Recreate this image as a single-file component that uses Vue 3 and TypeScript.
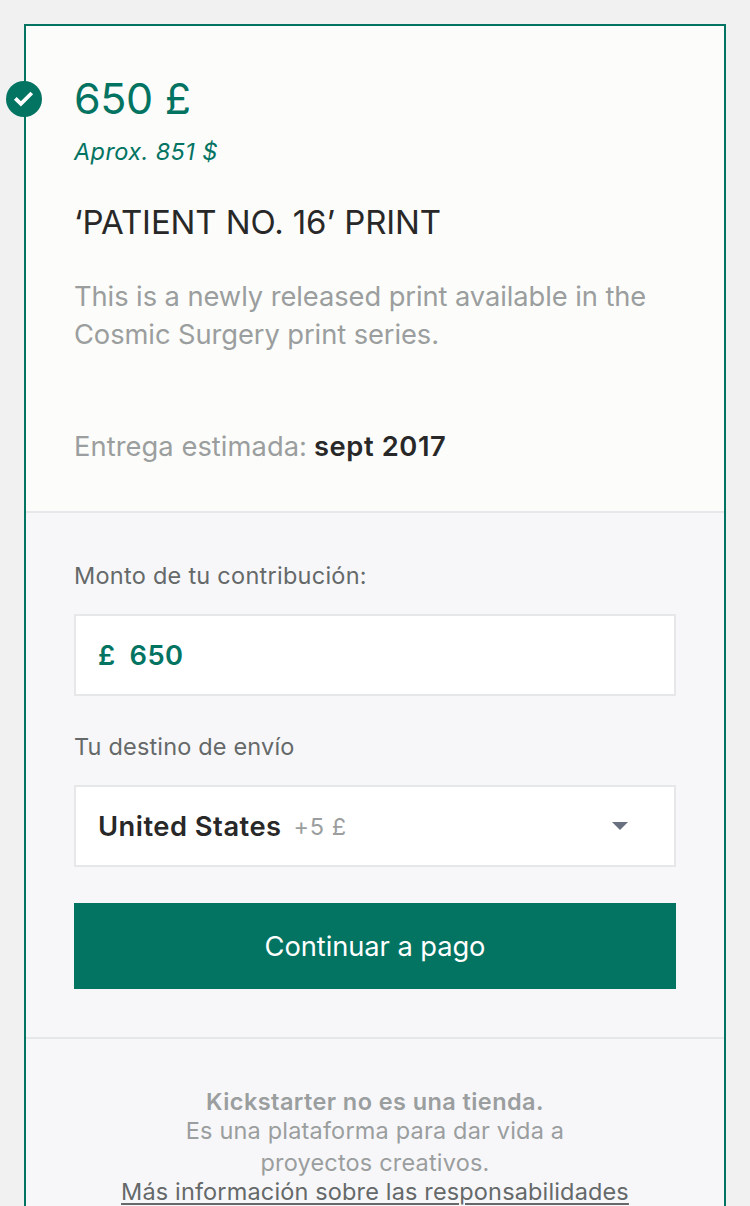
<script setup lang="ts">
import { ref } from 'vue'

interface Reward {
  price: string
  approx: string
  title: string
  description: string[]
  delivery: string
}

const reward: Reward = {
  price: '650 £',
  approx: 'Aprox. 851 $',
  title: '‘PATIENT NO. 16’ PRINT',
  description: ['This is a newly released print available in the', 'Cosmic Surgery print series.'],
  delivery: 'sept 2017',
}
const amount = ref('650')
</script>

<template>
  <main class="page">
    <article class="card">
      <span class="badge">
        <svg viewBox="0 0 36 36" width="36" height="36">
          <circle cx="18" cy="18" r="18" fill="#037362" />
          <path d="M9.3 17.3 L14.9 22.9 L25.8 12" fill="none" stroke="#fff" stroke-width="3.8" />
        </svg>
      </span>
      <section class="summary">
        <div class="price">{{ reward.price }}</div>
        <div class="approx">{{ reward.approx }}</div>
        <h3 class="title">{{ reward.title }}</h3>
        <p class="desc">
          <span v-for="(line, i) in reward.description" :key="i" class="line">{{ line }}</span>
        </p>
        <p class="delivery"><span class="muted">Entrega estimada:</span><b>{{ reward.delivery }}</b></p>
      </section>
      <section class="pledge">
        <label class="label">Monto de tu contribución:</label>
        <div class="field amount"><span class="currency">£</span><span class="value">{{ amount }}</span></div>
        <label class="label second">Tu destino de envío</label>
        <div class="field select">
          <span class="country">United States</span><span class="cost">+5 £</span>
          <svg class="caret" viewBox="0 0 16 8" width="16" height="8"><path d="M0 0H16L8 8Z" fill="#69707f" /></svg>
        </div>
        <button class="submit" type="button">Continuar a pago</button>
      </section>
      <footer class="note">
        <strong>Kickstarter no es una tienda.</strong>
        <span class="platform">Es una plataforma para dar vida a</span>
        <span class="platform">proyectos creativos.</span>
        <a>Más información sobre las responsabilidades</a>
      </footer>
    </article>
  </main>
</template>

<style>
html,
body {
  background: #f1f1f1;
  overflow: hidden;
}
</style>

<style scoped>
.page {
  box-sizing: border-box;
  height: 1206px;
  padding: 24px 24px 0;
  overflow: hidden;
  background: #f1f1f1;
  font-family: Inter, "Liberation Sans", sans-serif;
  color: #282828;
  white-space: nowrap;
}
.card {
  position: relative;
  box-sizing: border-box;
  height: 1220px;
  border: 2px solid #037362;
  background: #f7f7fa;
}
.badge {
  position: absolute;
  left: -20px;
  top: 55px;
  width: 36px;
  height: 36px;
}
.badge svg {
  display: block;
}
.summary {
  padding: 47px 48px 45px;
  background: #fcfcfa;
  border-bottom: 2px solid #e6e7e8;
}
.price {
  font-size: 43px;
  line-height: 50px;
  letter-spacing: -0.35px;
  color: #037362;
}
.approx {
  margin-top: 14px;
  font-size: 23.5px;
  line-height: 30px;
  font-style: italic;
  letter-spacing: 0.4px;
  color: #037362;
}
.title {
  margin: 35px 0 0;
  font-size: 33px;
  line-height: 40px;
  font-weight: 400;
  letter-spacing: -0.1px;
}
.desc {
  margin: 36px 0 0;
  font-size: 27.3px;
  line-height: 38px;
  letter-spacing: -0.07px;
  color: #9b9e9e;
}
.line {
  display: block;
}
.delivery {
  display: flex;
  gap: 7px;
  margin: 74px 0 0;
  font-size: 27.3px;
  line-height: 38px;
}
.muted {
  letter-spacing: 0.06px;
  color: #9b9e9e;
}
.delivery b {
  font-weight: 600;
  letter-spacing: 0.6px;
}
.pledge {
  padding: 48px;
  border-bottom: 2px solid #e6e7e8;
}
.label {
  display: block;
  margin-bottom: 23px;
  font-size: 23.5px;
  line-height: 30px;
  letter-spacing: 0.26px;
  color: #656969;
}
.label.second {
  margin: 36px 0 23px;
  letter-spacing: 0.17px;
}
.field {
  display: flex;
  box-sizing: border-box;
  height: 82px;
  padding: 2px 22px 0;
  border: 2px solid #e6e7e8;
  background: #fff;
  font-size: 27.3px;
  line-height: 76px;
  font-weight: 600;
}
.amount {
  gap: 14px;
  letter-spacing: 0.4px;
  color: #037362;
}
.select {
  align-items: center;
}
.country {
  letter-spacing: 0.5px;
}
.cost {
  margin-left: 12px;
  font-size: 23.5px;
  font-weight: 400;
  letter-spacing: 0.6px;
  color: #9b9e9e;
}
.caret {
  margin: 0 24px 2px auto;
}
.submit {
  display: block;
  width: 100%;
  height: 86px;
  margin-top: 36px;
  padding: 2px 0 0;
  border: 0;
  background: #037362;
  color: #fff;
  font: 400 27.3px/84px Inter, "Liberation Sans", sans-serif;
  letter-spacing: -0.07px;
}
.note {
  display: flex;
  flex-direction: column;
  align-items: center;
  padding-top: 48px;
  font-size: 23.5px;
  letter-spacing: 0.18px;
  color: #9b9e9e;
}
.note strong {
  padding-top: 1px;
  font-weight: 600;
  line-height: 27px;
  letter-spacing: 0.42px;
}
.platform {
  line-height: 32px;
}
.note a {
  line-height: 26px;
  letter-spacing: 0.15px;
  color: #656969;
  text-decoration: underline;
  text-decoration-thickness: 2px;
  text-underline-offset: 3px;
}
</style>
